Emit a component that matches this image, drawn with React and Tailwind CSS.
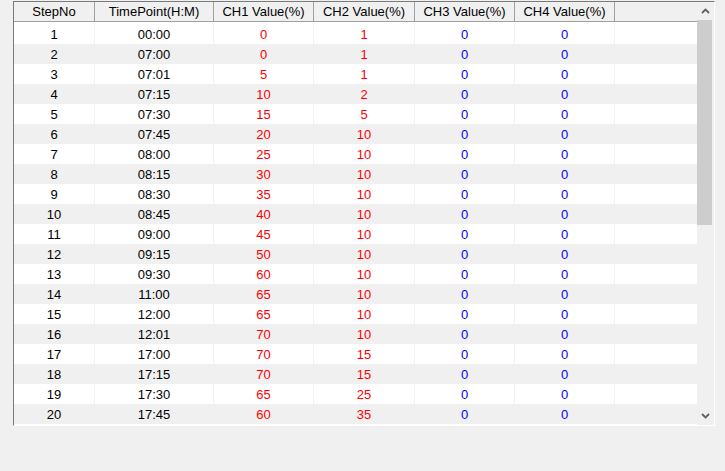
import React from 'react';

// 欄位定義 (寬度依照截圖量測)
const columns = [
    { key: 'step', label: 'StepNo', width: 'w-[81px]', color: 'text-black' },
    { key: 'time', label: 'TimePoint(H:M)', width: 'w-[119px]', color: 'text-black' },
    { key: 'ch1', label: 'CH1 Value(%)', width: 'w-[100px]', color: 'text-[#ff0000]' },
    { key: 'ch2', label: 'CH2 Value(%)', width: 'w-[101px]', color: 'text-[#ff0000]' },
    { key: 'ch3', label: 'CH3 Value(%)', width: 'w-[100px]', color: 'text-[#0000ff]' },
    { key: 'ch4', label: 'CH4 Value(%)', width: 'w-[100px]', color: 'text-[#0000ff]' },
];

const rows = [
    ['1', '00:00', '0', '1'],
    ['2', '07:00', '0', '1'],
    ['3', '07:01', '5', '1'],
    ['4', '07:15', '10', '2'],
    ['5', '07:30', '15', '5'],
    ['6', '07:45', '20', '10'],
    ['7', '08:00', '25', '10'],
    ['8', '08:15', '30', '10'],
    ['9', '08:30', '35', '10'],
    ['10', '08:45', '40', '10'],
    ['11', '09:00', '45', '10'],
    ['12', '09:15', '50', '10'],
    ['13', '09:30', '60', '10'],
    ['14', '11:00', '65', '10'],
    ['15', '12:00', '65', '10'],
    ['16', '12:01', '70', '10'],
    ['17', '17:00', '70', '15'],
    ['18', '17:15', '70', '15'],
    ['19', '17:30', '65', '25'],
    ['20', '17:45', '60', '35'],
].map(([step, time, ch1, ch2]) => ({ step, time, ch1, ch2, ch3: '0', ch4: '0' }));

function Chevron({ up }) {
    return (
        <svg width="9" height="6" viewBox="0 0 9 6" className="block">
            <path
                d={up ? 'M1 5 L4.5 1.5 L8 5' : 'M1 1 L4.5 4.5 L8 1'}
                fill="none"
                stroke="#606060"
                strokeWidth="1.8"
            />
        </svg>
    );
}

export default function App() {
    return (
        <div
            className="w-[725px] h-[471px] bg-[#f0f0f0] pt-px pl-[13px] text-[13px] leading-none"
            style={{ fontFamily: '"Liberation Sans", Arial, sans-serif' }}
        >
            {/* Grid 外框 (凹陷效果) */}
            <div className="flex w-[702px] h-[425px] border-l border-t border-l-[#7a7a7a] border-t-[#7a7a7a] border-r border-b border-r-white border-b-white bg-white">
                <div className="flex flex-col w-[683px]">
                    {/* Header */}
                    <div className="flex h-[20px] bg-[#f0f0f0] border-b border-[#a0a0a0]">
                        {columns.map((col) => (
                            <div
                                key={col.key}
                                className={`${col.width} flex items-center justify-center border-r border-[#a0a0a0] text-black`}
                            >
                                {col.label}
                            </div>
                        ))}
                        <div className="flex-1" />
                    </div>
                    <div className="h-[2px] bg-white" />

                    {/* Rows */}
                    {rows.map((row, idx) => (
                        <div key={idx} className={`flex h-[20px] ${idx % 2 === 0 ? 'bg-white' : 'bg-[#f0f0f0]'}`}>
                            {columns.map((col) => (
                                <div
                                    key={col.key}
                                    className={`${col.width} ${col.color} flex items-center justify-center border-r border-[#f0f0f0]`}
                                >
                                    {row[col.key]}
                                </div>
                            ))}
                            <div className="flex-1" />
                        </div>
                    ))}
                </div>

                {/* Scrollbar */}
                <div className="flex flex-col w-[17px] bg-[#f0f0f0]">
                    <div className="flex h-[18px] items-center justify-center">
                        <Chevron up />
                    </div>
                    <div className="h-[205px] w-[15px] bg-[#cdcdcd]" />
                    <div className="flex-1" />
                    <div className="flex h-[18px] items-center justify-center">
                        <Chevron />
                    </div>
                </div>
            </div>
        </div>
    );
}
